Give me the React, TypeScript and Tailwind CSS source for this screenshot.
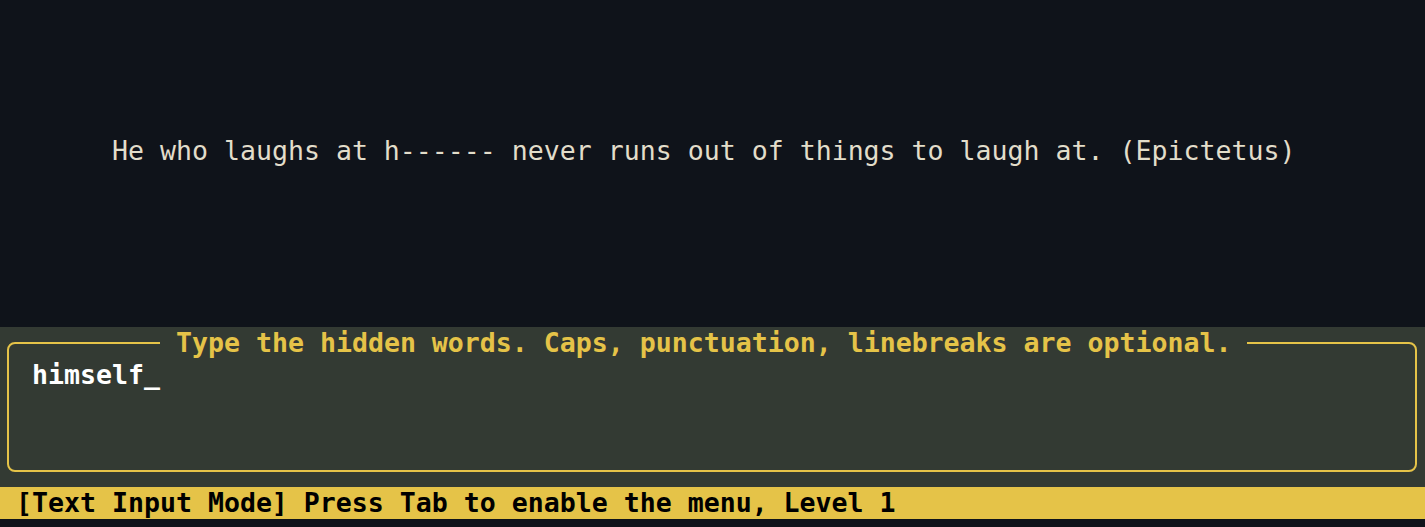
import React from "react";

const mono = { fontFamily: '"DejaVu Sans Mono", "Liberation Mono", monospace' };

export default function App() {
  return (
    <div
      className="w-[1425px] h-[527px] bg-[#0f131a] flex flex-col overflow-hidden text-[26.57px] leading-[32px]"
      style={mono}
    >
      <div className="h-[327px] pt-[135px] pl-[112px] text-[#e2ddca] whitespace-pre">
        He who laughs at h------ never runs out of things to laugh at. (Epictetus)
      </div>
      <div className="h-[160px] bg-[#333a33] pt-[15px] pl-[7px] pr-[8px]">
        <div className="relative h-[130px] border-2 border-[#e5c348] rounded-[8px] pt-[15px] pl-[23px]">
          <div className="absolute left-[151px] top-[-17px] px-[16px] bg-[#333a33] text-[#e5c348] font-bold whitespace-pre">
            Type the hidden words. Caps, punctuation, linebreaks are optional.
          </div>
          <div className="text-white font-bold whitespace-pre">himself_</div>
        </div>
      </div>
      <div className="h-[32px] bg-[#e5c348] pl-[16px] text-black font-bold whitespace-pre">
        [Text Input Mode] Press Tab to enable the menu, Level 1
      </div>
    </div>
  );
}
